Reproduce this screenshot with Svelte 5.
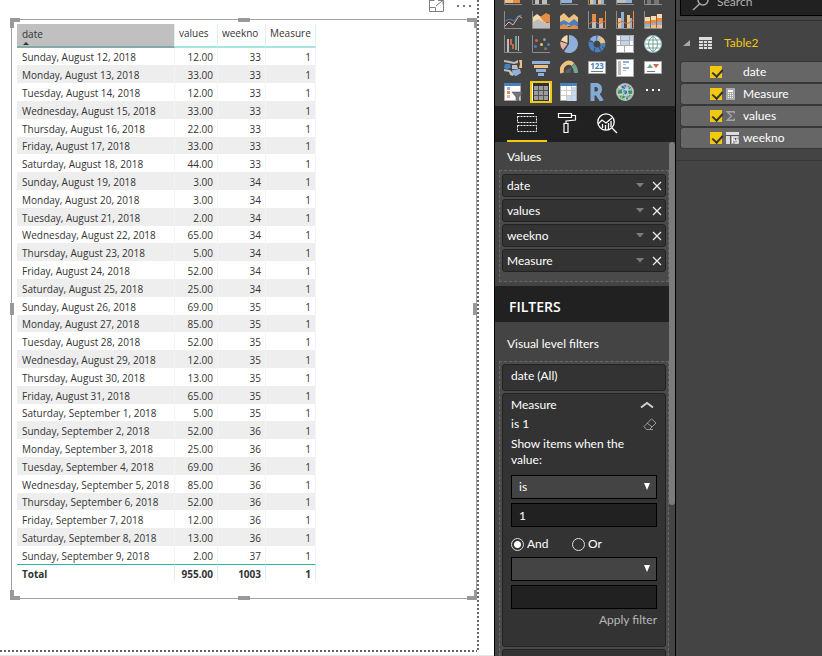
<script>
  const days = ['Sunday', 'Monday', 'Tuesday', 'Wednesday', 'Thursday', 'Friday', 'Saturday'];
  const amounts = [12, 33, 12, 33, 22, 33, 44, 3, 3, 2, 65, 5, 52, 25, 69, 85, 52, 12, 13, 65, 5, 52, 25, 69, 85, 52, 12, 13, 2];
  const rows = amounts.map((v, i) => ({
    date: `${days[i % 7]}, ${i < 20 ? 'August ' + (12 + i) : 'September ' + (i - 19)}, 2018`,
    value: v.toFixed(2),
    week: 33 + Math.floor(i / 7)
  }));

  const wells = ['date', 'values', 'weekno', 'Measure'];
  const fields = [
    { name: 'date', icon: '' },
    { name: 'Measure', icon: 'calc' },
    { name: 'values', icon: 'sum' },
    { name: 'weekno', icon: 'column' }
  ];

  let joiner = $state('and');
  let operator = $state('is');
  let second = $state('');
  let operand = $state('1');
  let secondOperand = $state('');
  let selectedVisual = $state('Table');

  const axis = ['M.5 0V17.5H18', 'none', '#8c8c8c', 1];
  const B = '#4a80bd', L = '#8fb0d8', O = '#e38d45', P = '#efc17e', G = '#bdbdbd', R = '#d5634a', T = '#73a590', W = '#fff', D = '#777', K = '#e9b3a4';

  // Each visual is a list of strokes: [path, fill, stroke, stroke width]
  const visuals = [
    { name: 'Stacked bar', art: [axis, ['M1 13h8v3H1z', P], ['M9 13h7v3H9z', O]] },
    { name: 'Stacked column', art: [axis, ['M3 8h4v9H3zM10 5h5v12h-5z', G]] },
    { name: 'Clustered bar', art: [axis, ['M1 13h11v3H1z', L]] },
    { name: 'Clustered column', art: [axis, ['M2 9h3v8H2zM10 9h3v8h-3z', P], ['M5 7h3v10H5zM13 7h3v10h-3z', L]] },
    { name: '100% stacked bar', art: [axis, ['M1 13h9v3H1z', G], ['M10 13h6v3h-6z', L]] },
    { name: '100% stacked column', art: [axis, ['M3 5h4v12H3zM10 5h5v12h-5z', D]] },

    { name: 'Line', art: [axis, ['M1 15l4-4 4 3 6-9 3 2', 'none', K, 1], ['M1 10l5-2 4 2 4-5 4-1', 'none', B, 1]] },
    { name: 'Area', art: [['M1 6l4-3 4 3 5 5v6H1z', '#f5dcae'], ['M8 6l6-4 4 2v8l-6-1z', O], ['M1 11l5-3 7 4h5v5H1z', G], axis] },
    { name: 'Stacked area', art: [['M0 5l4-3 5 5 5-4 5 4v6H0z', P], ['M0 11l4-2 5 3 5-4 5 4v3H0z', B], ['M0 15l4-2 5 3 5-2 5 2v2H0z', O], ['M5 15l3-2 3 2z', L], ['M-.5 0v18.500h19', 'none', D, 1]] },
    { name: 'Line and stacked column', art: [['M4 3h4v7H4zM11 7h4v4h-4z', O], ['M4 10h4v7H4zM11 11h4v6h-4z', G], ['M17.5 0v17', 'none', O, 1], ['M1 13l5-3 5 3 6-3', 'none', R, 1], axis] },
    { name: 'Line and clustered column', art: [['M2 7h3v10H2zM11 4h3v13h-3z', P], ['M5 1h3v16H5zM14 7h2v10h-2z', L], ['M17.5 0v17', 'none', O, 1], ['M1 13l5-3 5 3 6-4', 'none', R, 1], axis] },
    { name: 'Ribbon', art: [['M1 6h5l2-1h4l2-2h4v14H1z', '#a9603a'], ['M1 6h5v4H1zM7 5h5v4H7zM13 3h5v4h-5z', '#f5dcae'], ['M1 10h5v3H1zM7 9h5v3H7zM13 7h5v4h-5z', O], ['M1 13h5v3H1zM7 12h5v2H7zM13 11h5v3h-5z', L], ['M1 16h5v1H1zM7 14h5v3H7zM13 14h5v3h-5z', P], axis] },

    { name: 'Waterfall', art: [['M3 4h2v13H3zM14 1h1v15h-1z', G], ['M6 4h2v6H6zM8 9h2v5H8z', R], ['M11 1h2v14h-2z', T], axis] },
    { name: 'Scatter', art: [['M4.500 4a1.500 1.500 0 1 1 0 3 1.500 1.500 0 0 1 0-3z', R], ['M12.500 3a1.500 1.500 0 1 1 0 3 1.500 1.500 0 0 1 0-3z', T], ['M9.500 8a1.500 1.500 0 1 1 0 3 1.500 1.500 0 0 1 0-3z', P], ['M3.500 10a1.500 1.500 0 1 1 0 3 1.500 1.500 0 0 1 0-3zM16.500 8a1.500 1.500 0 1 1 0 3 1.500 1.500 0 0 1 0-3z', B], ['M13.500 12a1.500 1.500 0 1 1 0 3 1.500 1.500 0 0 1 0-3z', D], axis] },
    { name: 'Pie', art: [['M9 0a9 9 0 1 1-5 16.500L9 9z', L], ['M7.500 8V0A9 9 0 0 0 1 5.500z', '#f5dcae'], ['M7.500 9L.500 6.500A9 9 0 0 0 3 15z', K]] },
    { name: 'Donut', art: [['M9 3a6 6 0 1 1-6 6 6 6 0 0 1 6-6z', 'none', B, 5], ['M9.500 3A6 6 0 0 1 12 4', 'none', G, 5], ['M12 4a6 6 0 0 1 3 4', 'none', P, 5], ['M4 5.500a6 6 0 0 1 4-2.500', 'none', L, 5], ['M1 6l4 1M14 12l3 2M7 13l-1 4M11 12l2 4', 'none', '#3b4a5c', 1]] },
    { name: 'Treemap', art: [['M0 0h18v18H0z', W], ['M5 1h8v9H5zM14 1h3v5h-3z', '#c2d5eb'], ['M4.500 0v10M13.500 0v10M0 5.500h9M0 10.500h18M8.500 10v7M5 5.500h8M.5.5h17v17H.5z', 'none', '#aaa', 1]] },
    { name: 'Map', art: [['M9 .5a8.500 8.500 0 1 1 0 17 8.500 8.500 0 0 1 0-17z', W, L, 1], ['M9 1v16M1 9h16M2.500 5h13M2.500 13h13M9 1c-6 5-6 11 0 16M9 1c6 5 6 11 0 16', 'none', T, 1]] },

    { name: 'Filled map', art: [['M0 1l6 1 4 1 4-2v3l-4 1-5-1-5-1z', G], ['M1 5h5l1 4-5 1-2-1z', B], ['M8 6h5l1 4H8z', G], ['M15 1h3v8h-3l1-4z', P], ['M0 10l6 1 3 3v3l-3-1-1-3-5-1z', G], ['M8 11l8-1 1 4-5 3-3-1z', L]] },
    { name: 'Funnel', art: [['M0 2h18v3H0zM4 10h10v3H4zM6 14h6v3H6z', L], ['M2 6h14v3H2z', P]] },
    { name: 'Gauge', art: [['M2 14a7 8 0 0 1 11-8.500', 'none', P, 4], ['M13 6q3 3 3 8', 'none', T, 4], ['M5 14q1-4 5-5l2-1-2 6z', '#5e5e5e']] },
    { name: 'Card', card: true, art: [['M.5 2.500h17v12H.5z', W, '#aaa', 1], ['M3 12.500h12', 'none', D, 1]] },
    { name: 'Multi-row card', art: [['M.5.5h17v17H.5z', W, '#aaa', 1], ['M2 2h3v14H2z', G], ['M7 2h6v2H7zM7 8h6v2H7z', L], ['M7 5h3v1H7zM7 11h3v1H7z', G]] },
    { name: 'KPI', art: [['M.5 2.500h17v12H.5z', W, '#aaa', 1], ['M3 9l3-4 3 4z', T], ['M9 5h6l-3 4z', R], ['M3 12.500h8', 'none', D, 1]] },

    { name: 'Slicer', art: [['M.5.5h16v17H.5z', W, '#aaa', 1], ['M0 0h17v3H0z', B], ['M3 4h3v3H3z', L], ['M3 8h3v3H3z', O], ['M3 12h3v3H3z', K], ['M8 9h11l-4 5v4.500l-3-1.500v-3z', D, '#444', .5]] },
    { name: 'Table', art: [['M0 0h18v18H0z', W], ['M1 0h16v18H1z', '#303030'], ['M2 3h14v14H2z', '#555'], ['M2 3h4v4H2zM7 3h4v4H7zM12 3h4v4h-4zM2 8h4v4H2zM7 8h4v4H7zM12 8h4v4h-4zM2 13h4v4H2zM7 13h4v4H7zM12 13h4v4h-4z', '#9c9c9c']] },
    { name: 'Matrix', art: [['M.5.5h16v17H.5z', W, '#aaa', 1], ['M0 0h17v3H0z', B], ['M12 4h4v14h-4zM7 13h5v5H7z', '#c8daee'], ['M6.500 3v14M11.500 3v14M1 7.500h15M1 12.500h15', 'none', '#c8cdd2', 1]] },
    { name: 'R script', art: [['M4.500 18V2H9a4.500 4.500 0 0 1 0 8.500H4.500M9 10.500L14 18', 'none', '#84a9d5', 4]] },
    { name: 'ArcGIS', art: [['M9 0a9 9 0 1 1 0 18A9 9 0 0 1 9 0z', '#b4bab7'], ['M2 8l4-2v4l-4 1zM4 13l5-2 1 3-5 2zM12 8l4-2v5l-4 1zM9 15l4-1-2 3z', '#2f9e46'], ['M6 3l4-1-1 4-4 1zM7 8l4-2v4l-4 2zM12 3l3 1-2 3zM11 13l4-2-2 4z', '#1a74b5'], ['M2 4q8 4 15 3M1 11q8 3 16 0M6 1q8 8 7 16M3 3q6 6 7 15M15 3Q7 8 5 16', 'none', '#dfe3e1', .7]] },
    { name: 'More visuals', art: [['M2 6h2v2H2zM8 6h2v2H8zM14 6h2v2h-2z', W]] }
  ];
</script>

<div class="app">
  <main class="report">
    <div class="page">
      <div class="tools">
        <button class="bare" aria-label="Focus mode">
          <svg width="15" height="12" viewBox="0 0 15 12" fill="none" stroke="#808080"><path d="M.5 0v11.500h14V0M.5.5h5M11 .5h3.500M.5 7.500h6v4M7 6l6-5M9 .5h5v4" /></svg>
        </button>
        <button class="bare" aria-label="More options">
          <svg width="16" height="12" viewBox="0 0 16 12" fill="#777"><path d="M1 5h2v2H1zM7 5h2v2H7zM13 5h2v2h-2z" /></svg>
        </button>
      </div>
      <section class="visual" aria-label="Table visual">
        <i class="corner tl"></i><i class="corner tr"></i><i class="corner bl"></i><i class="corner br"></i>
        <i class="grip top"></i><i class="grip bottom"></i><i class="grip left"></i><i class="grip right"></i>
        <table>
          <colgroup><col class="c1" /><col class="c2" /><col class="c3" /><col class="c4" /></colgroup>
          <thead>
            <tr><th class="sorted" aria-sort="ascending">date<svg width="6" height="3" viewBox="0 0 6 3"><path d="M0 3l3-3 3 3z" fill="#333" /></svg></th><th>values</th><th>weekno</th><th>Measure</th></tr>
          </thead>
          <tbody>
            {#each rows as r}
              <tr><td>{r.date}</td><td>{r.value}</td><td>{r.week}</td><td>1</td></tr>
            {/each}
          </tbody>
          <tfoot>
            <tr><td>Total</td><td>955.00</td><td>1003</td><td>1</td></tr>
          </tfoot>
        </table>
      </section>
    </div>
  </main>

  <aside class="build">
    <div class="gallery">
      <div class="icons">
        {#each visuals as v}
          <button class="viz" class:on={selectedVisual === v.name} aria-label={v.name} onclick={() => (selectedVisual = v.name)}>
            <svg width="18" height="18" viewBox="0 0 18 18">
              {#each v.art as [d, fill, stroke, w]}
                <path {d} {fill} stroke={stroke ?? 'none'} stroke-width={w ?? 0} />
              {/each}
              {#if v.card}<text x="9" y="10" text-anchor="middle">123</text>{/if}
            </svg>
          </button>
        {/each}
      </div>
    </div>

    <div class="tabs">
      <button class="tab on" aria-label="Fields">
        <svg width="20" height="20" viewBox="0 0 20 20" fill="none" stroke="#fff"><path d="M0 .5h17" /><path d="M.5 3.500h19v6H.5zM.5 12.500h19v6H.5z" stroke-dasharray="2 1" /></svg>
      </button>
      <button class="tab" aria-label="Format">
        <svg width="20" height="20" viewBox="0 0 20 20" fill="none" stroke="#fff" stroke-width="1.200"><path d="M1.500.5h13v4h-13zM14.500 2.500h4V7L9 8v3M7 10.500h4v9H7z" /></svg>
      </button>
      <button class="tab" aria-label="Analytics">
        <svg width="22" height="21" viewBox="0 0 22 21" fill="none" stroke="#fff" stroke-width="1.300"><circle cx="10" cy="9" r="8.200" /><path d="M16 15l5 5M2 11l4-4 4 3 6-5M6.500 11v4M9.500 12v5M12.500 10v7M15 8v6" /></svg>
      </button>
    </div>

    <div class="scroll">
      <i class="bar"></i>
      <h3>Values</h3>
      <ul class="well">
        {#each wells as w}
          <li class="chip">
            <span>{w}</span>
            <button class="bare" aria-label="{w} options"><svg width="8" height="5" viewBox="0 0 8 5"><path d="M0 0h8L4 4.500z" fill="#7c7c7c" /></svg></button>
            <button class="bare" aria-label="Remove {w}"><svg width="10" height="10" viewBox="0 0 10 10" fill="none" stroke="#eee" stroke-width="1.200"><path d="M1 1l8 8M9 1L1 9" /></svg></button>
          </li>
        {/each}
      </ul>
      <h2>FILTERS</h2>
      <h3>Visual level filters</h3>
      <div class="well filters">
        <div class="card short">date (All)</div>
        <div class="card">
          <div class="line">
            <span>Measure</span>
            <button class="bare" aria-label="Collapse"><svg width="20" height="8" viewBox="0 0 20 8" fill="none" stroke="#d0d0d0" stroke-width="2"><path d="M4 6.500L10 2l6 4.500" /></svg></button>
          </div>
          <div class="line">
            <span>is 1</span>
            <button class="bare" aria-label="Clear filter"><svg width="14" height="12" viewBox="0 0 14 12" fill="none" stroke="#999"><path d="M8.500.8L13 5l-6.500 6.500h-3L1 8.500zM4 5l5 4M4 11.500h6" /></svg></button>
          </div>
          <p>Show items when the value:</p>
          <div class="pick">
            <select aria-label="Condition" bind:value={operator}><option>is</option><option>is not</option></select>
            <svg width="6" height="7" viewBox="0 0 6 7"><path d="M0 0h6L3 7z" fill="#fff" /></svg>
          </div>
          <input class="box" type="text" aria-label="Condition value" bind:value={operand} />
          <div class="radios">
            <label><input type="radio" name="join" value="and" bind:group={joiner} /><span>And</span></label>
            <label><input type="radio" name="join" value="or" bind:group={joiner} /><span>Or</span></label>
          </div>
          <div class="pick">
            <select aria-label="Second condition" bind:value={second}><option value=""></option><option>is</option></select>
            <svg width="6" height="7" viewBox="0 0 6 7"><path d="M0 0h6L3 7z" fill="#fff" /></svg>
          </div>
          <input class="box" type="text" aria-label="Second condition value" bind:value={secondOperand} />
          <button class="bare apply">Apply filter</button>
        </div>
        <div class="card short"></div>
      </div>
    </div>
  </aside>

  <aside class="fields">
    <div class="searchbar">
      <label class="search">
        <svg width="17" height="17" viewBox="0 0 17 17" fill="none" stroke="#aaa" stroke-width="1.500"><circle cx="11" cy="6" r="5" /><path d="M7.500 10L1 16" /></svg>
        <input type="text" placeholder="Search" aria-label="Search" />
      </label>
    </div>
    <div class="tree">
      <div class="tablerow">
        <svg width="7" height="7" viewBox="0 0 7 7"><path d="M7 0v6H0z" fill="#a8a8a8" /></svg>
        <svg class="grid" width="13" height="12" viewBox="0 0 13 12"><path d="M0 0h13v12H0z" fill="#ddd" /><path d="M0 3.500h13M0 6.500h13M0 9.500h13M4.500 3v9M8.500 3v9" stroke="#555" /></svg>
        <span>Table2</span>
      </div>
      {#each fields as f}
        <label class="field">
          <input type="checkbox" checked />
          <span class="kind">
            {#if f.icon === 'calc'}
              <svg width="9" height="12" viewBox="0 0 9 12"><path d="M0 0h9v12H0z" fill="#aaa" /><path d="M2 2h5v2H2zM2 5h1v1H2zM4 5h1v1H4zM6 5h1v1H6zM2 7h1v1H2zM4 7h1v1H4zM6 7h1v1H6zM2 9h1v1H2zM4 9h1v1H4zM6 9h1v1H6z" fill="#fff" /></svg>
            {:else if f.icon === 'sum'}
              <svg width="9" height="10" viewBox="0 0 9 10" fill="none" stroke="#a5a5a5" stroke-width="1.400"><path d="M8.300 2.500V.8H1.200L5.500 5 1.200 9.200h7.100V7.500" /></svg>
            {:else if f.icon === 'column'}
              <svg width="13" height="12" viewBox="0 0 13 12"><path d="M0 0h13v12H0z" fill="#aaa" /><path d="M0 0h13v3H0zM0 4h4v8H0z" fill="#ddd" /><path d="M6 5h6M6.500 5v6M6 8h3M10 5.500L8.500 8H12v3H9" fill="none" stroke="#fff" /><path d="M4.500 3v9M9.500 6v2M0 3.500h13" stroke="#555" /></svg>
            {/if}
          </span>
          <span>{f.name}</span>
        </label>
      {/each}
    </div>
  </aside>
</div>

<style>
  .app {
    display: flex;
    height: 100vh;
    overflow: hidden;
    background: #fff;
    font: 12px/16px Lato, 'Open Sans', sans-serif;
    color: #fff;
  }
  .app *, .app { box-sizing: border-box; }
  button, input, select { font: inherit; color: inherit; margin: 0; }
  .bare { border: 0; padding: 0; background: none; display: flex; }
  svg { display: block; flex: none; }

  .report {
    flex: 1;
    min-width: 0;
    display: flex;
    padding: 0 15px 3px 0;
    border-bottom: 1px solid #e4e4e4;
  }
  .page {
    flex: 1;
    display: flex;
    flex-direction: column;
    padding: 0 2px 53px 11px;
    background:
      repeating-linear-gradient(to bottom, #666 0 2px, #fff 2px 4px) right / 2px 100% no-repeat,
      repeating-linear-gradient(to right, #666 0 2px, #fff 2px 4px) bottom / 100% 2px no-repeat;
  }
  .tools { height: 19px; display: flex; justify-content: flex-end; gap: 12px; padding-right: 5px; align-items: flex-start; }
  .visual { flex: 1; position: relative; border: 1px solid #a0a0a0; padding: 4px 5px; color: #333; }
  .corner, .grip { position: absolute; border: 0 solid #999; }
  .corner { width: 10px; height: 10px; }
  .tl { left: -2px; top: -2px; border-width: 4px 0 0 4px; }
  .tr { right: -1px; top: -2px; border-width: 4px 3px 0 0; }
  .bl { left: -2px; bottom: -2px; border-width: 0 0 4px 4px; }
  .br { right: -1px; bottom: -2px; border-width: 0 3px 4px 0; }
  .grip { background: #999; }
  .top, .bottom { width: 12px; height: 4px; left: calc(50% - 6px); }
  .left, .right { width: 4px; height: 12px; top: calc(50% - 6px); }
  .top { top: -2px; }
  .bottom { bottom: -2px; }
  .left { left: -2px; }
  .right { right: -1px; }

  table { border-collapse: separate; border-spacing: 0; table-layout: fixed; width: 299px; font-family: 'Open Sans', 'Noto Sans', sans-serif; font-size: 10px; line-height: 16px; }
  .c1 { width: 158px; }
  .c2 { width: 43px; }
  .c3 { width: 48px; }
  .c4 { width: 50px; }
  th { height: 24px; padding: 0 4px 4px; border-right: 1px solid #d9f3f0; border-bottom: 2px solid #a9e5e0; font-weight: 400; text-align: left; white-space: nowrap; }
  th.sorted { background: #c0c0c0; background-clip: padding-box; padding: 2px 5px 0; border-bottom-color: #84aaa7; }
  th svg { margin: 0 0 1px 1px; }
  td { height: 18px; padding: 1px 4px 0; text-align: right; white-space: nowrap; border-right: 1px solid #f4f4f4; }
  td:first-child { text-align: left; padding: 1px 5px 0; }
  tbody tr:nth-child(5n + 1) td { height: 17px; }
  tbody tr:nth-child(even) { background: #eee; }
  tfoot td, tfoot td:first-child { border-top: 1px solid #2bb5a8; border-right: 1px solid #d9f3f0; font-weight: 700; padding-top: 0; }

  .build { width: 182px; flex: none; display: flex; flex-direction: column; background: #444; border: solid #000; border-width: 0 1px; }
  .gallery { height: 106px; flex: none; overflow: hidden; display: flex; flex-direction: column; justify-content: flex-end; padding: 0 4px 2px; }
  .icons { display: grid; grid-template-columns: repeat(6, 28px); grid-auto-rows: 24px; }
  .viz { padding: 0; border: 2px solid transparent; background: none; width: 22px; height: 22px; margin: 1px 3px; display: flex; align-items: center; justify-content: center; }
  .viz.on { border-color: #f2c811; background: #fff; }
  .viz text { font: 700 8px 'Open Sans', sans-serif; fill: #4a80bd; }
  .tabs { height: 36px; flex: none; display: flex; background: #212121; padding-left: 12px; }
  .tab { width: 40px; padding: 0; background: none; border: 0; border-bottom: 2px solid transparent; display: flex; align-items: center; justify-content: center; }
  .tab.on { border-color: #f2c811; }
  .scroll { flex: 1; min-height: 0; overflow: hidden; position: relative; }
  .bar { position: absolute; right: 0; top: 0; width: 6px; height: 363px; border-radius: 3px; background: #7b7b7b; }
  h2, h3, p, ul { margin: 0; padding: 0; list-style: none; }
  h3 { font-size: 12px; line-height: 16px; font-weight: 400; padding: 7px 12px 5px; }
  h2 { margin-top: 4px; height: 36px; padding: 0 14px; background: #212121; font: 600 14px/42px 'Open Sans', sans-serif; margin-right: 6px; }
  h2 + h3 { padding-top: 14px; padding-bottom: 9px; }
  .well { margin: 0 6px 0 4px; padding: 3px 2px 9px; border: 1px dashed #686868; background: #4a4a4a; display: flex; flex-direction: column; gap: 2px; }
  .chip { height: 23px; border: 1px solid #222; border-radius: 3px; background: #333; display: flex; align-items: center; gap: 8px; padding: 0 3px 0 4px; }
  .chip span { flex: 1; }
  .filters { padding-top: 2px; }
  .card { border: 1px solid #222; border-radius: 3px; background: #333; padding: 1px 8px 18px; }
  .short { height: 27px; padding: 3px 8px; }
  .line { display: flex; justify-content: space-between; align-items: center; height: 19px; line-height: 16px; }
  p { margin: 3px 0 7px; line-height: 16px; padding-right: 16px; }
  .pick { position: relative; height: 24px; }
  .pick svg { position: absolute; right: 7px; top: 8px; pointer-events: none; }
  select { appearance: none; display: block; width: 100%; height: 24px; padding: 0 7px; background: #444; border: 1px solid #000; border-radius: 0; }
  .box { display: block; width: 100%; height: 24px; margin-top: 4px; padding: 0 7px; background: #212121; border: 1px solid #000; border-radius: 0; }
  .radios { display: flex; gap: 20px; height: 30px; align-items: center; padding-top: 4px; }
  .radios label { display: flex; align-items: center; gap: 3px; width: 41px; }
  .radios input { appearance: none; flex: none; width: 13px; height: 13px; border: 1px solid #ddd; border-radius: 50%; background: #333; }
  .radios input:checked { background: radial-gradient(circle, #fff 0 3px, #333 4px); }
  .apply { margin: 3px 0 0 auto; color: #b8b8b8; }

  .fields { width: 146px; flex: none; background: #444; }
  .searchbar { height: 21px; overflow: hidden; display: flex; flex-direction: column; justify-content: flex-end; border-bottom: 1px solid #303030; padding: 0 0 4px 4px; }
  .search { height: 28px; flex: none; display: flex; align-items: center; gap: 8px; background: #212121; border: 1px solid #000; border-right: 0; padding-left: 11px; }
  .search input { flex: 1; min-width: 0; background: none; border: 0; padding: 0; }
  .search input::placeholder { color: #b0b0b0; opacity: 1; }
  .tree { padding: 0 0 11px 4px; border-bottom: 1px solid #383838; }
  .tablerow { height: 40px; display: flex; align-items: center; color: #f2c811; padding-left: 3px; padding-top: 4px; }
  .grid { margin: 0 12px 0 9px; }
  .field { height: 22px; display: flex; align-items: center; padding-left: 29px; background: #666; border: 1px solid #383838; border-right: 0; border-radius: 3px 0 0 3px; }
  .field input { appearance: none; width: 12px; height: 12px; background: #f2c811; position: relative; flex: none; }
  .field input:checked::after { content: ''; position: absolute; left: 4px; top: 1px; width: 5px; height: 8px; border: solid #333; border-width: 0 2px 2px 0; transform: rotate(42deg); }
  .kind { width: 21px; padding-left: 4px; flex: none; display: flex; }
</style>
